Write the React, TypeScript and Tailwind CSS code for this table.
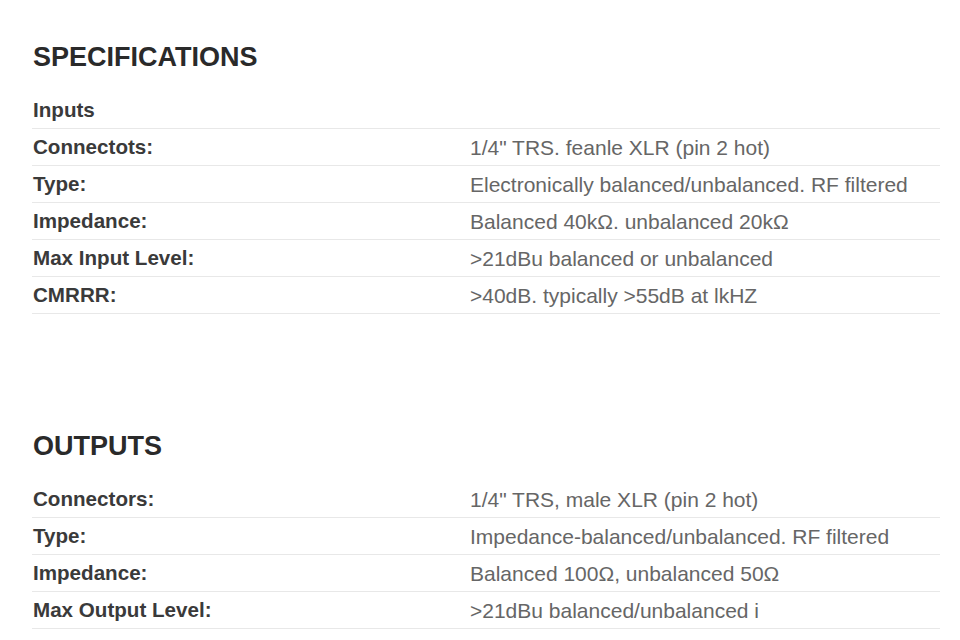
const inputs: [string, string][] = [
  ["Inputs", ""],
  ["Connectots:", "1/4\" TRS. feanle XLR (pin 2 hot)"],
  ["Type:", "Electronically balanced/unbalanced. RF filtered"],
  ["Impedance:", "Balanced 40kΩ. unbalanced 20kΩ"],
  ["Max Input Level:", ">21dBu balanced or unbalanced"],
  ["CMRRR:", ">40dB. typically >55dB at lkHZ"],
];

const outputs: [string, string][] = [
  ["Connectors:", "1/4\" TRS, male XLR (pin 2 hot)"],
  ["Type:", "Impedance-balanced/unbalanced. RF filtered"],
  ["Impedance:", "Balanced 100Ω, unbalanced 50Ω"],
  ["Max Output Level:", ">21dBu balanced/unbalanced i"],
];

function SpecTable({ rows }: { rows: [string, string][] }) {
  return (
    <div className="mt-5">
      {rows.map(([label, value], i) => (
        <div
          key={i}
          className="grid grid-cols-[438px_1fr] h-[37px] items-center border-b border-[#e8e8e8]"
        >
          <div className="pl-px text-[20.6px] font-bold text-[#3a3a3a]">{label}</div>
          <div className="text-[21px] text-[#666]">{value}</div>
        </div>
      ))}
    </div>
  );
}

export default function App() {
  return (
    <div className="w-[960px] h-[640px] bg-white pl-8 pr-5 pt-[42px] font-['Liberation_Sans',Arial,sans-serif] leading-none">
      <h2 className="h-[30px] flex items-center pl-px text-[27px] font-bold text-[#2a2a2a]">
        SPECIFICATIONS
      </h2>
      <SpecTable rows={inputs} />

      <h2 className="mt-[117px] h-[30px] flex items-center pl-px text-[27px] font-bold text-[#2a2a2a]">
        OUTPUTS
      </h2>
      <SpecTable rows={outputs} />
    </div>
  );
}
